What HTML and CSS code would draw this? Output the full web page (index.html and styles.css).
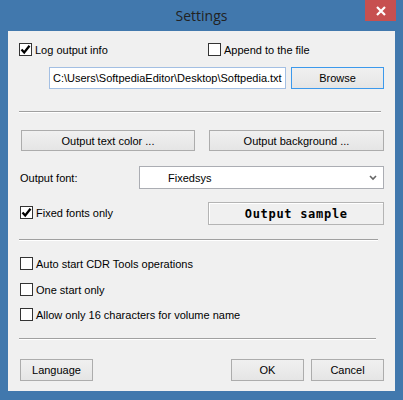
FILE: index.html
```html
<!DOCTYPE html>
<html>
<head>
<meta charset="utf-8">
<link rel="stylesheet" href="styles.css">
</head>
<body>
<div class="window">
  <div class="titlebar">
    <span class="title">Settings</span>
    <div class="close">
      <svg width="10" height="10" viewBox="0 0 10 10"><path d="M1 1 L9 9 M9 1 L1 9" stroke="#fff" stroke-width="2.2"/></svg>
    </div>
  </div>
  <div class="client">
    <div class="row r1">
      <label class="chk first"><span class="box"><svg width="11" height="11" viewBox="0 0 11 11"><path d="M1.5 5.5 L4.2 8.5 L9.5 1.8" fill="none" stroke="#000" stroke-width="2.3"/></svg></span>Log output info</label>
      <label class="chk"><span class="box"></span>Append to the file</label>
    </div>
    <div class="row r2">
      <div class="path">C:\Users\SoftpediaEditor\Desktop\Softpedia.txt</div>
      <div class="btn default browse">Browse</div>
    </div>
    <div class="sep s1"></div>
    <div class="row r3">
      <div class="btn color1">Output text color ...</div>
      <div class="btn color2">Output background ...</div>
    </div>
    <div class="row r4">
      <span class="label">Output font:</span>
      <div class="select"><span class="sel-text">Fixedsys</span>
        <svg class="chev" width="8" height="6" viewBox="0 0 8 6"><path d="M1 1 L4 4 L7 1" fill="none" stroke="#666" stroke-width="1.6"/></svg>
      </div>
    </div>
    <div class="row r5">
      <label class="chk fixed"><span class="box"><svg width="11" height="11" viewBox="0 0 11 11"><path d="M1.5 5.5 L4.2 8.5 L9.5 1.8" fill="none" stroke="#000" stroke-width="2.3"/></svg></span>Fixed fonts only</label>
      <div class="sample">Output sample</div>
    </div>
    <div class="sep s2"></div>
    <label class="chk opt o1"><span class="box"></span>Auto start CDR Tools operations</label>
    <label class="chk opt o2"><span class="box"></span>One start only</label>
    <label class="chk opt o3"><span class="box"></span>Allow only 16 characters for volume name</label>
    <div class="sep s3"></div>
    <div class="row bottom">
      <div class="btn small">Language</div>
      <div class="spacer"></div>
      <div class="btn small">OK</div>
      <div class="btn small cancel">Cancel</div>
    </div>
  </div>
</div>
</body>
</html>
```

FILE: styles.css
```css
* { box-sizing: border-box; }
html, body { margin: 0; padding: 0; }
body { width: 403px; height: 400px; overflow: hidden; }

.window {
  width: 403px;
  height: 400px;
  background: #4178ad;
  display: flex;
  flex-direction: column;
  font-family: "Liberation Sans", Arial, sans-serif;
  font-size: 11px;
  color: #000;
}

.titlebar {
  height: 31px;
  position: relative;
  display: flex;
  justify-content: center;
  align-items: center;
}
.title {
  font-family: "Open Sans", "Noto Sans", sans-serif;
  font-size: 14px;
  color: #222;
  margin-top: -1px;
}
.close {
  position: absolute;
  top: 0;
  left: 365px;
  width: 31px;
  height: 21px;
  background: #c75050;
  display: flex;
  align-items: center;
  justify-content: center;
}

.client {
  margin: 0 8px 9px 8px;
  flex: 1;
  background: #f0f0f0;
  padding: 0 11px;
  display: flex;
  flex-direction: column;
}

.row { display: flex; align-items: center; }

.chk {
  display: flex;
  align-items: center;
  height: 13px;
  white-space: nowrap;
}
.box {
  width: 13px;
  height: 13px;
  border: 1px solid #333;
  background: #fff;
  margin-right: 3px;
  display: flex;
  align-items: center;
  justify-content: center;
  flex: none;
}

.r1 { margin-top: 12px; height: 13px; }
.r1 .first { width: 189px; }

.r2 { margin-top: 11px; height: 22px; }
.path {
  margin-left: 30px;
  width: 237px;
  height: 22px;
  border: 1px solid #a3bfe3;
  background: #fff;
  padding-left: 3px;
  line-height: 20px;
  white-space: nowrap;
  overflow: hidden;
}
.btn {
  height: 21px;
  border: 1px solid #acacac;
  background: linear-gradient(#f0f0f0, #e5e5e5);
  display: flex;
  align-items: center;
  justify-content: center;
  white-space: nowrap;
}
.btn.default { border-color: #3c99ec; }
.browse { margin-left: 5px; width: 93px; height: 22px; }

.sep {
  height: 2px;
  border-top: 1px solid #a0a0a0;
  border-bottom: 1px solid #fff;
}
.s1 { margin-top: 22px; width: 362px; }

.r3 { margin-top: 17px; }
.color1 { margin-left: 2px; width: 174px; }
.color2 { margin-left: 14px; width: 175px; }

.r4 { margin-top: 15px; height: 23px; }
.label { width: 120px; padding-left: 1px; }
.select {
  width: 245px;
  height: 23px;
  border: 1px solid #abadb3;
  background: #fff;
  display: flex;
  align-items: center;
  padding-left: 28px;
  padding-right: 6px;
}
.sel-text { flex: 1; }
.chev { flex: none; }

.r5 { margin-top: 13px; height: 23px; }
.fixed { width: 189px; margin-left: 1px; margin-top: -2px; }
.fixed .box { margin-right: 3px; }
.sample {
  width: 176px;
  height: 23px;
  border: 1px solid #b4b4b4;
  box-shadow: inset 1px 1px 0 #fff;
  display: flex;
  align-items: center;
  justify-content: center;
  font-family: "DejaVu Sans Mono", "Liberation Mono", monospace;
  font-weight: bold;
  font-size: 12px;
  letter-spacing: 0.7px;
}

.s2 { margin-top: 14px; width: 359px; }

.opt { margin-left: 1px; }
.o1 { margin-top: 16px; }
.o2 { margin-top: 13px; }
.o3 { margin-top: 12px; }

.s3 { margin-top: 17px; width: 357px; }

.bottom { margin-top: 19px; }
.small { width: 73px; height: 22px; }
.bottom .small:first-child { margin-left: 1px; }
.spacer { flex: 1; }
.cancel { margin-left: 7px; }
```
